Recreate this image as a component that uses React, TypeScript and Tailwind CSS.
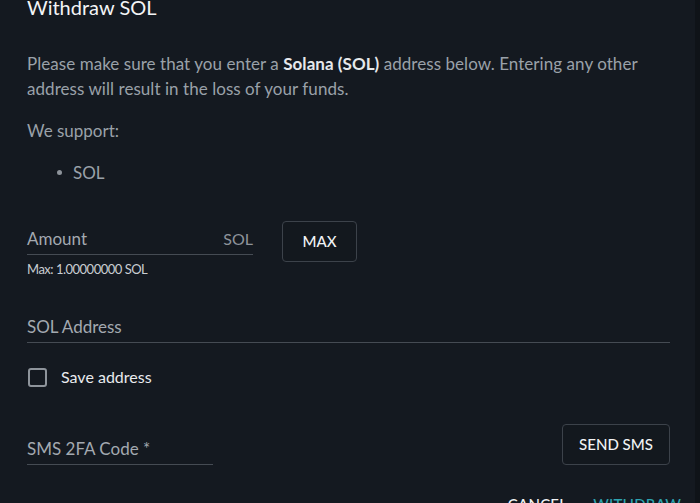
import React from 'react';

function Field({ label, suffix, width }: { label: string; suffix?: string; width: string }) {
  return (
    <div className={`flex items-end justify-between border-b border-[#454b53] pb-[5px] ${width}`}>
      <span className="text-[17px] leading-[20px] text-[#a3a9b0]">{label}</span>
      {suffix && <span className="text-[16px] leading-[20px] text-[#8d939a]">{suffix}</span>}
    </div>
  );
}

function OutlineButton({ children, className }: { children: React.ReactNode; className?: string }) {
  return (
    <button
      className={`h-[41px] rounded-[4px] border border-[#3c424a] bg-[#13181e] text-[15px] font-medium text-[#f1f3f5] ${className ?? ''}`}
    >
      {children}
    </button>
  );
}

export default function App() {
  return (
    <div className="flex h-[503px] w-[700px] overflow-hidden bg-[#141920] font-['Lato','Noto_Sans',sans-serif]">
      <div className="flex-1 pl-[27px] pr-[25px]">
        <h2 className="-mt-[5px] text-[20px] leading-[24px] text-[#f3f4f6]">Withdraw SOL</h2>

        <p className="mt-[32px] text-[17px] leading-[25px] tracking-[0.05px] text-[#9aa1a9]">
          Please make sure that you enter a <span className="font-bold text-[#e6e8eb]">Solana (SOL)</span> address
          below. Entering any other address will result in the loss of your funds.
        </p>

        <p className="mt-[17px] text-[17px] leading-[25px] text-[#9aa1a9]">We support:</p>

        <div className="mt-[17px] flex items-center text-[17px] leading-[25px] text-[#9aa1a9]">
          <span className="ml-[30px] h-[5px] w-[5px] rounded-full bg-[#8d939a]" />
          <span className="ml-[11px]">SOL</span>
        </div>

        {/* amount */}
        <div className="mt-[36px] flex items-start">
          <div className="mt-[8px]">
            <Field label="Amount" suffix="SOL" width="w-[226px]" />
            <div className="mt-[6px] text-[13px] leading-[16px] tracking-[-0.5px] text-[#c9cdd2]">
              Max: 1.00000000 SOL
            </div>
          </div>
          <OutlineButton className="ml-[29px] w-[75px]">MAX</OutlineButton>
        </div>

        <div className="mt-[40px]">
          <Field label="SOL Address" width="w-full" />
        </div>

        <label className="mt-[24px] flex items-center">
          <span className="ml-[1px] h-[19px] w-[19px] rounded-[3px] border-2 border-[#8e949b]" />
          <span className="ml-[14px] text-[16px] leading-[20px] text-[#e9ebee]">Save address</span>
        </label>

        <div className="mt-[37px] flex items-end justify-between">
          <Field label="SMS 2FA Code *" width="w-[186px]" />
          <OutlineButton className="w-[108px]">SEND SMS</OutlineButton>
        </div>

        <div className="mt-[28px] flex justify-end gap-[26px] text-[15px] font-medium tracking-[0.2px]">
          <button className="text-[#f1f3f5]">CANCEL</button>
          <button className="mr-[-11px] text-[#2ea4b0]">WITHDRAW</button>
        </div>
      </div>
      <div className="w-[5px] bg-[#0f1318]" />
    </div>
  );
}
